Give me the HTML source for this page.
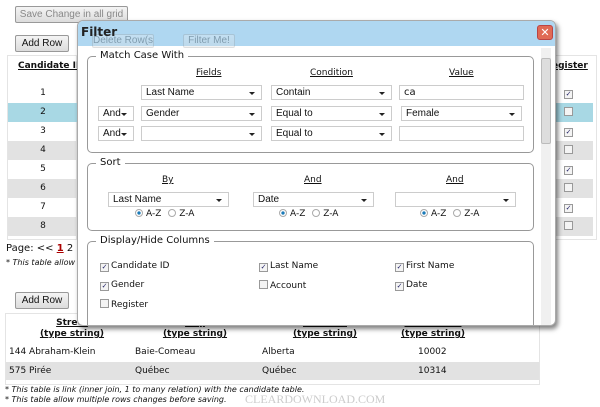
<!DOCTYPE html>
<html><head><meta charset="utf-8"><style>
*{box-sizing:border-box;margin:0;padding:0}
body{width:600px;height:406px;overflow:hidden;background:#fff;font-family:"DejaVu Sans","Liberation Sans",sans-serif;font-size:9px;color:#111;position:relative}
.a{position:absolute;white-space:nowrap}
.btn{position:absolute;white-space:nowrap;overflow:hidden;border:1px solid #999;border-radius:2px;background:linear-gradient(#f4f4f4,#dcdcdc);font-family:"Liberation Sans",sans-serif;font-size:10px;text-align:center;line-height:15px;height:17px}
.sel{position:absolute;height:15px;border:1px solid #ccc;background:#fff;font-family:"Liberation Sans",sans-serif;font-size:10px;line-height:13px;padding-left:4px}
.sel:after{content:"";position:absolute;right:6px;top:6px;border-left:3px solid transparent;border-right:3px solid transparent;border-top:3px solid #222}
.inp{position:absolute;height:15px;border:1px solid #ccc;background:#fff;font-size:10px;line-height:13px;padding-left:4px}
.fs{position:absolute;border:1px solid #999;border-radius:5px}
.lg{position:absolute;background:#fff;padding:0 4px;font-size:10px;top:-7px;left:8px;white-space:nowrap}
.u{text-decoration:underline;position:absolute;font-size:9px}
.cb{display:inline-block;width:9px;height:9px;border:1px solid #999;background:#f4f4f4;vertical-align:-1px;margin-right:2px;font-size:7px;line-height:7px;color:#226;text-align:center}
.rd{display:inline-block;width:8px;height:8px;border-radius:50%;border:1px solid #aaa;vertical-align:-1px;margin-right:3px;background:#fff}
.rd.on{background:radial-gradient(#1a7ab8 35%,#fff 45%)}
.row{position:absolute;height:19px}
</style></head><body>
<div class="btn" style="left:15px;top:6px;width:113px;color:#888">Save Change in all grid</div>
<div class="btn" style="left:15px;top:35px;width:54px">Add Row</div>
<div class="a" style="left:7px;top:55px;width:70px;height:185px;border:1px solid #e4e4e4"></div>
<div class="a" style="left:18px;top:61px;font-weight:bold;text-decoration:underline">Candidate ID</div>
<div class="row" style="left:8px;top:84px;width:70px;text-align:center;line-height:19px">1</div>
<div class="row" style="left:8px;top:103px;width:70px;background:#a8d8e4;text-align:center;line-height:19px">2</div>
<div class="row" style="left:8px;top:122px;width:70px;text-align:center;line-height:19px">3</div>
<div class="row" style="left:8px;top:141px;width:70px;background:#e2e2e2;text-align:center;line-height:19px">4</div>
<div class="row" style="left:8px;top:160px;width:70px;text-align:center;line-height:19px">5</div>
<div class="row" style="left:8px;top:179px;width:70px;background:#e2e2e2;text-align:center;line-height:19px">6</div>
<div class="row" style="left:8px;top:198px;width:70px;text-align:center;line-height:19px">7</div>
<div class="row" style="left:8px;top:217px;width:70px;background:#e2e2e2;text-align:center;line-height:19px">8</div>
<div class="a" style="left:550px;top:55px;width:47px;height:185px;border:1px solid #e4e4e4"></div>
<div class="a" style="left:552px;top:61px;font-weight:bold;text-decoration:underline">egister</div>
<div class="row" style="left:551px;top:103px;width:42px;background:#a8d8e4"></div>
<div class="row" style="left:551px;top:141px;width:42px;background:#e2e2e2"></div>
<div class="row" style="left:551px;top:179px;width:42px;background:#e2e2e2"></div>
<div class="row" style="left:551px;top:217px;width:42px;background:#e2e2e2"></div>
<div class="a" style="left:564px;top:88px"><span class="cb">✓</span></div>
<div class="a" style="left:564px;top:107px"><span class="cb"></span></div>
<div class="a" style="left:564px;top:126px"><span class="cb">✓</span></div>
<div class="a" style="left:564px;top:145px"><span class="cb"></span></div>
<div class="a" style="left:564px;top:164px"><span class="cb">✓</span></div>
<div class="a" style="left:564px;top:183px"><span class="cb"></span></div>
<div class="a" style="left:564px;top:202px"><span class="cb">✓</span></div>
<div class="a" style="left:564px;top:221px"><span class="cb"></span></div>
<div class="a" style="left:6px;top:243px;font-size:10px">Page: &lt;&lt; <b style="color:#a00;text-decoration:underline">1</b> 2</div>
<div class="a" style="left:6px;top:258px;font-size:8px;font-style:italic">* This table allow</div>
<div class="btn" style="left:15px;top:292px;width:54px">Add Row</div>
<div class="a" style="left:5px;top:313px;width:535px;height:72px;border:1px solid #e4e4e4"></div>
<div class="a" style="left:37px;top:318px;width:70px;text-align:center;font-weight:bold;text-decoration:underline;line-height:11px">Street<br>(type string)</div>
<div class="a" style="left:160px;top:318px;width:70px;text-align:center;font-weight:bold;text-decoration:underline;line-height:11px">City<br>(type string)</div>
<div class="a" style="left:290px;top:318px;width:70px;text-align:center;font-weight:bold;text-decoration:underline;line-height:11px">Province<br>(type string)</div>
<div class="a" style="left:398px;top:318px;width:70px;text-align:center;font-weight:bold;text-decoration:underline;line-height:11px">PostalCode<br>(type string)</div>
<div class="a" style="left:6px;top:343px;width:533px;height:18px;line-height:18px"><span class="a" style="left:3px">144 Abraham-Klein</span><span class="a" style="left:129px">Baie-Comeau</span><span class="a" style="left:256px">Alberta</span><span class="a" style="left:412px">10002</span></div>
<div class="a" style="left:6px;top:362px;width:533px;height:18px;line-height:18px;background:#e2e2e2"><span class="a" style="left:3px">575 Pirée</span><span class="a" style="left:129px">Québec</span><span class="a" style="left:256px">Québec</span><span class="a" style="left:412px">10314</span></div>
<div class="a" style="left:5px;top:385px;font-size:8px;font-style:italic;line-height:10px">* This table is link (inner join, 1 to many relation) with the candidate table.<br>* This table allow multiple rows changes before saving.</div>
<div class="a" style="left:245px;top:392px;font-family:'Liberation Serif',serif;color:#ccc;font-size:12px">CLEARDOWNLOAD.COM</div>

<div class="a" style="left:77px;top:20px;width:479px;height:306px;border:1px solid #aaa;border-radius:6px;background:#fff;box-shadow:2px 3px 5px rgba(0,0,0,.5);overflow:hidden">
 <div class="a" style="left:0;top:0;width:479px;height:25px;background:rgba(168,212,240,.92)"></div>
 <div class="btn" style="left:14px;top:13px;width:62px;height:14px;opacity:.3;line-height:12px">Delete Row(s)</div>
 <div class="btn" style="left:105px;top:13px;width:52px;height:14px;opacity:.3;line-height:12px">Filter Me!</div>
 <div class="a" style="left:3px;top:4px;font-weight:bold;font-size:12px;color:#222">Filter</div>
 <div class="a" style="left:459px;top:4px;width:16px;height:15px;border-radius:3px;background:#e06a55;border:1px solid #b44;color:#fff;text-align:center;font-size:11px;line-height:13px">✕</div>
 <div class="a" style="left:463px;top:27px;width:10px;height:277px;background:#f0f0f0"></div>
 <div class="a" style="left:463px;top:37px;width:10px;height:86px;background:#ddd;border:1px solid #bbb;border-radius:2px"></div>
 <div class="fs" style="left:9px;top:35px;width:447px;height:97px"><div class="lg">Match Case With</div></div>
 <div class="u" style="left:118px;top:47px">Fields</div>
 <div class="u" style="left:232px;top:47px">Condition</div>
 <div class="u" style="left:371px;top:47px">Value</div>
 <div class="sel" style="left:63px;top:64px;width:121px">Last Name</div>
 <div class="sel" style="left:193px;top:64px;width:121px">Contain</div>
 <div class="inp" style="left:321px;top:64px;width:125px">ca</div>
 <div class="sel" style="left:20px;top:85px;width:36px">And</div>
 <div class="sel" style="left:63px;top:85px;width:121px">Gender</div>
 <div class="sel" style="left:193px;top:85px;width:121px">Equal to</div>
 <div class="sel" style="left:323px;top:85px;width:121px">Female</div>
 <div class="sel" style="left:20px;top:105px;width:36px">And</div>
 <div class="sel" style="left:63px;top:105px;width:121px"></div>
 <div class="sel" style="left:193px;top:105px;width:121px">Equal to</div>
 <div class="inp" style="left:321px;top:105px;width:125px"></div>
 <div class="fs" style="left:9px;top:142px;width:447px;height:68px"><div class="lg">Sort</div></div>
 <div class="u" style="left:84px;top:154px">By</div>
 <div class="u" style="left:226px;top:154px">And</div>
 <div class="u" style="left:368px;top:154px">And</div>
 <div class="sel" style="left:30px;top:171px;width:121px">Last Name</div>
 <div class="sel" style="left:175px;top:171px;width:121px">Date</div>
 <div class="sel" style="left:317px;top:171px;width:121px"></div>
 <div class="a" style="left:57px;top:188px"><span class="rd on"></span>A-Z <span class="rd" style="margin-left:4px"></span>Z-A</div>
 <div class="a" style="left:201px;top:188px"><span class="rd on"></span>A-Z <span class="rd" style="margin-left:4px"></span>Z-A</div>
 <div class="a" style="left:342px;top:188px"><span class="rd on"></span>A-Z <span class="rd" style="margin-left:4px"></span>Z-A</div>
 <div class="fs" style="left:9px;top:220px;width:447px;height:100px"><div class="lg">Display/Hide Columns</div></div>
 <div class="a" style="left:22px;top:240px"><span class="cb">✓</span>Candidate ID</div>
 <div class="a" style="left:181px;top:240px"><span class="cb">✓</span>Last Name</div>
 <div class="a" style="left:317px;top:240px"><span class="cb">✓</span>First Name</div>
 <div class="a" style="left:22px;top:259px"><span class="cb">✓</span>Gender</div>
 <div class="a" style="left:181px;top:259px"><span class="cb"></span>Account</div>
 <div class="a" style="left:317px;top:259px"><span class="cb">✓</span>Date</div>
 <div class="a" style="left:22px;top:278px"><span class="cb"></span>Register</div>
</div>
</body></html>
